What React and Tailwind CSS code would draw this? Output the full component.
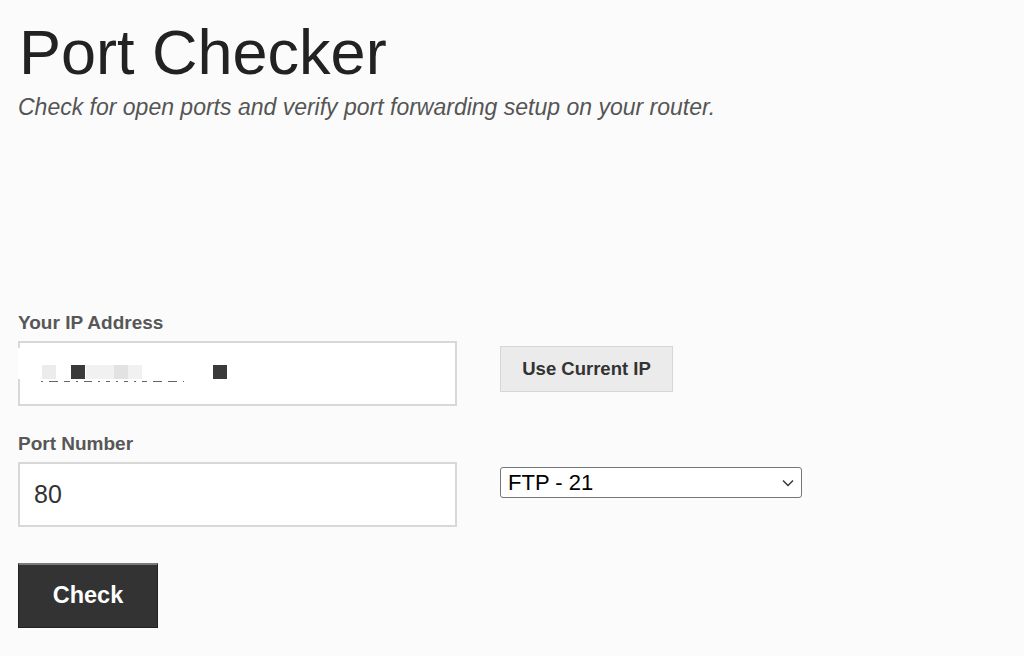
import { useState } from 'react';

const mosaic = [
  { left: 22, w: 14, c: 'bg-[#ececec]' },
  { left: 51, w: 14, c: 'bg-[#3a3a3a]' },
  { left: 66, w: 28, c: 'bg-[#f1f1f1]' },
  { left: 94, w: 14, c: 'bg-[#e2e2e2]' },
  { left: 108, w: 14, c: 'bg-[#f1f1f1]' },
  { left: 193, w: 14, c: 'bg-[#3a3a3a]' },
];

const App = () => {
  const [port, setPort] = useState('80');
  const [service, setService] = useState('21');

  return (
    <div className="min-h-[656px] bg-[#fbfbfb] px-[18px] pt-[12px] font-['Liberation_Sans',Arial,sans-serif] text-[#222]">
      <h1 className="pl-[1px] text-[63px] leading-[80px] text-[#222]">Port Checker</h1>
      <p className="mt-[2px] text-[23px] italic leading-[26px] text-[#555]">
        Check for open ports and verify port forwarding setup on your router.
      </p>

      <form className="mt-[192px]" onSubmit={(e) => e.preventDefault()}>
        <label className="block text-[19px] font-bold leading-[22px] text-[#575757]">Your IP Address</label>
        <div className="mt-[7px] flex items-start gap-[43px]">
          <div className="relative h-[65px] w-[439px] border-2 border-[#d8d8d8] bg-white">
            {/* pixelated redaction over the ip value */}
            <div className="absolute left-[-2px] top-[5px] h-[31px] w-[230px] bg-white" />
            {mosaic.map((m, i) => (
              <div
                key={i}
                className={`absolute top-[22px] h-[14px] ${m.c}`}
                style={{ left: m.left, width: m.w }}
              />
            ))}
            <div className="absolute left-[21px] top-[38px] flex gap-[6px]">
              {[2, 9, 6, 2, 8, 2, 4, 2, 4, 2, 5, 9, 9, 1].map((w, i) => (
                <span key={i} className="h-[1px] bg-[#666]" style={{ width: w }} />
              ))}
            </div>
          </div>
          <button
            type="button"
            className="mt-[5px] h-[46px] w-[173px] border border-[#d6d6d6] bg-[#ebebeb] text-[18.5px] font-bold text-[#333]"
          >
            Use Current IP
          </button>
        </div>

        <label className="mt-[27px] block text-[19px] font-bold leading-[22px] text-[#575757]">Port Number</label>
        <div className="mt-[7px] flex items-start gap-[43px]">
          <input
            value={port}
            onChange={(e) => setPort(e.target.value)}
            className="h-[65px] w-[439px] border-2 border-[#d8d8d8] bg-white px-[14px] text-[25px] text-[#333] outline-none"
          />
          <div className="relative mt-[5px]">
            <select
              value={service}
              onChange={(e) => setService(e.target.value)}
              className="h-[31px] w-[302px] appearance-none rounded-[3px] border border-[#767676] bg-white pl-[7px] text-[22px] leading-[29px] text-black outline-none"
            >
              <option value="21">FTP - 21</option>
              <option value="22">SSH - 22</option>
              <option value="80">HTTP - 80</option>
              <option value="443">HTTPS - 443</option>
            </select>
            <svg
              className="pointer-events-none absolute right-[8px] top-[12px]"
              width="12"
              height="8"
              viewBox="0 0 12 8"
              fill="none"
            >
              <path d="M1 1.5l5 5 5-5" stroke="#333" strokeWidth="1.4" />
            </svg>
          </div>
        </div>

        <button
          type="submit"
          className="mt-[36px] h-[65px] w-[140px] border border-[#222] border-t-2 border-t-[#7a7a7a] bg-[#333] text-[23.5px] font-bold text-white"
        >
          Check
        </button>
      </form>
    </div>
  );
};

export default App;
